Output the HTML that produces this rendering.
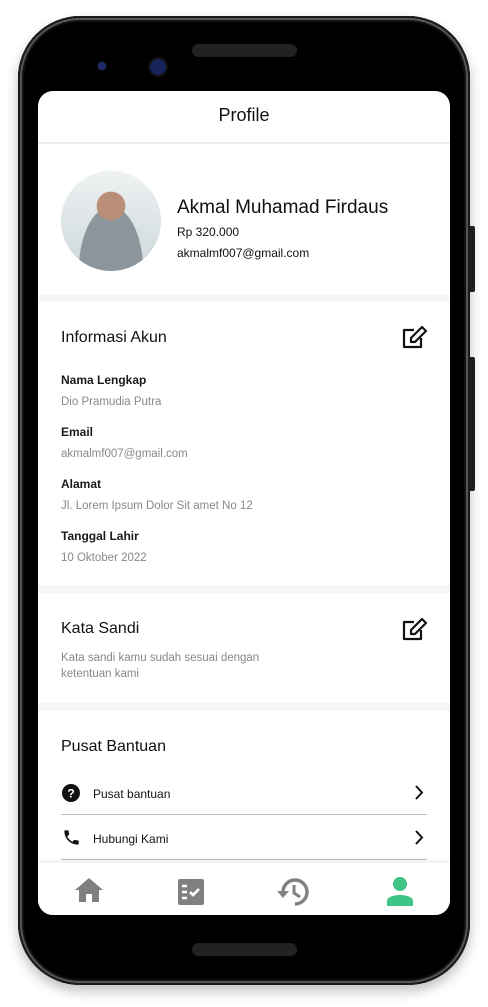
<!DOCTYPE html>
<html><head><meta charset="utf-8"><style>
*{margin:0;padding:0;box-sizing:border-box}
body{width:488px;height:1007px;background:#fff;position:relative;overflow:hidden;font-family:"Liberation Sans",sans-serif;color:#111}
.abs{position:absolute}
.frame{left:18px;top:16px;width:452px;height:969px;background:#000;border-radius:62px;box-shadow:0 0 0 2px #1a1a1a inset,0 0 0 4px #555 inset,0 0 0 6px #111 inset,0 6px 12px rgba(0,0,0,.25)}
.screen{left:38px;top:91px;width:412px;height:824px;background:#fff;border-radius:15px;overflow:hidden}
.sep{position:absolute;left:0;width:412px;background:#f6f6f6}
.t{position:absolute;white-space:nowrap}
.lbl{font-size:12px;font-weight:bold;color:#1a1a1a}
.val{font-size:11.5px;color:#888}
</style></head><body>
<div class="abs" style="left:470px;top:226px;width:5px;height:66px;background:#222;border-radius:0 2px 2px 0"></div>
<div class="abs" style="left:470px;top:357px;width:5px;height:134px;background:#222;border-radius:0 2px 2px 0"></div>
<div class="abs frame"></div>
<div class="abs" style="left:192px;top:44px;width:105px;height:13px;background:#222;border-radius:7px"></div>
<div class="abs" style="left:98px;top:62px;width:8px;height:8px;background:#1a2a6a;border-radius:50%;box-shadow:0 0 0 1px #111"></div>
<div class="abs" style="left:150px;top:59px;width:16px;height:16px;background:#16235a;border-radius:50%;box-shadow:0 0 0 2px #111"></div>
<div class="abs" style="left:192px;top:943px;width:105px;height:13px;background:#222;border-radius:7px"></div>
<div class="abs screen">
  <div class="t" style="left:0;width:412px;text-align:center;top:14px;font-size:18px">Profile</div>
  <div class="abs" style="left:0;top:51px;width:412px;height:3px;background:linear-gradient(#e2e2e2,#fff)"></div>
  <div class="abs" style="left:23px;top:80px;width:100px;height:100px;border-radius:50%;background:radial-gradient(circle at 50% 35%,#b98f78 0 17%,transparent 18%),radial-gradient(ellipse at 50% 100%,#8c949c 0 45%,transparent 46%),linear-gradient(#eef2f3,#cdd7d8)"></div>
  <div class="t" style="left:139px;top:106px;font-size:19px">Akmal Muhamad Firdaus</div>
  <div class="t" style="left:139px;top:134px;font-size:12px">Rp 320.000</div>
  <div class="t" style="left:139px;top:155px;font-size:12px">akmalmf007@gmail.com</div>
  <div class="sep" style="top:204px;height:7px"></div>
  <div class="t" style="left:23px;top:238px;font-size:16px">Informasi Akun</div>
  <svg class="abs" style="left:364px;top:235px" width="26" height="24" viewBox="0 0 26 24" fill="none" stroke="#111" stroke-width="2.2" stroke-linejoin="round"><path d="M12 4H2v17h17v-9"/><path d="M20 1l4 4-11 11H9v-4z"/></svg>
  <div class="t lbl" style="left:23px;top:282px">Nama Lengkap</div>
  <div class="t val" style="left:23px;top:305px">Dio Pramudia Putra</div>
  <div class="t lbl" style="left:23px;top:334px">Email</div>
  <div class="t val" style="left:23px;top:357px">akmalmf007@gmail.com</div>
  <div class="t lbl" style="left:23px;top:386px">Alamat</div>
  <div class="t val" style="left:23px;top:409px">Jl. Lorem Ipsum Dolor Sit amet No 12</div>
  <div class="t lbl" style="left:23px;top:438px">Tanggal Lahir</div>
  <div class="t val" style="left:23px;top:461px">10 Oktober 2022</div>
  <div class="sep" style="top:494px;height:8px"></div>
  <div class="t" style="left:23px;top:529px;font-size:16px">Kata Sandi</div>
  <svg class="abs" style="left:364px;top:527px" width="26" height="24" viewBox="0 0 26 24" fill="none" stroke="#111" stroke-width="2.2" stroke-linejoin="round"><path d="M12 4H2v17h17v-9"/><path d="M20 1l4 4-11 11H9v-4z"/></svg>
  <div class="t val" style="left:23px;top:559px;line-height:16px">Kata sandi kamu sudah sesuai dengan<br>ketentuan kami</div>
  <div class="sep" style="top:612px;height:8px"></div>
  <div class="t" style="left:23px;top:647px;font-size:16px">Pusat Bantuan</div>
  <svg class="abs" style="left:24px;top:693px" width="18" height="18" viewBox="0 0 18 18"><circle cx="9" cy="9" r="9" fill="#111"/><text x="9" y="13.5" font-size="12" font-weight="bold" fill="#fff" text-anchor="middle" font-family="Liberation Sans">?</text></svg>
  <div class="t" style="left:55px;top:696px;font-size:12px">Pusat bantuan</div>
  <svg class="abs" style="left:376px;top:694px" width="10" height="15" viewBox="0 0 10 15" fill="none" stroke="#111" stroke-width="2"><path d="M2 1l6 6.5L2 14"/></svg>
  <div class="abs" style="left:23px;top:723px;width:366px;height:1px;background:#bbb"></div>
  <svg class="abs" style="left:24px;top:737px" width="19" height="19" viewBox="0 0 24 24"><path fill="#111" d="M6.6 10.8c1.4 2.8 3.8 5.1 6.6 6.6l2.2-2.2c.3-.3.7-.4 1-.2 1.1.4 2.300.6 3.600.6.6 0 1 .4 1 1V20c0 .6-.4 1-1 1C10.6 21 3 13.4 3 4c0-.6.4-1 1-1h3.5c.6 0 1 .4 1 1 0 1.3.2 2.5.6 3.6.1.3 0 .7-.2 1z"/></svg>
  <div class="t" style="left:55px;top:741px;font-size:12px">Hubungi Kami</div>
  <svg class="abs" style="left:376px;top:739px" width="10" height="15" viewBox="0 0 10 15" fill="none" stroke="#111" stroke-width="2"><path d="M2 1l6 6.5L2 14"/></svg>
  <div class="abs" style="left:23px;top:768px;width:366px;height:1px;background:#bbb"></div>
  <div class="abs" style="left:0;top:772px;width:412px;height:52px;background:#fff;box-shadow:0 -2px 4px rgba(0,0,0,.08)"></div>
  <svg class="abs" style="left:36px;top:786px" width="30" height="26" viewBox="0 0 30 26"><path fill="#808080" d="M15 1L1 13h4v12h7v-8h6v8h7V13h4z"/></svg>
  <svg class="abs" style="left:140px;top:788px" width="26" height="26" viewBox="0 0 26 26"><rect width="26" height="26" rx="2" fill="#808080"/><path stroke="#fff" stroke-width="2.4" d="M4 7h5M4 13h5M4 19h5"/><path stroke="#fff" stroke-width="2.6" fill="none" d="M12 13l3 3 6-6"/></svg>
  <svg class="abs" style="left:238px;top:785px" width="34" height="32" viewBox="0 0 34 32"><path fill="none" stroke="#808080" stroke-width="3.4" d="M7 16A12 12 0 1 1 19 28"/><path fill="#808080" d="M1 15h12l-6 7z"/><path fill="none" stroke="#808080" stroke-width="3" d="M18 9v8l6 4"/></svg>
  <svg class="abs" style="left:349px;top:786px" width="26" height="29" viewBox="0 0 26 29"><circle cx="13" cy="7" r="7" fill="#3ec487"/><path fill="#3ec487" d="M0 29v-5c0-4 7-6 13-6s13 2 13 6v5z"/></svg>
</div>
</body></html>
